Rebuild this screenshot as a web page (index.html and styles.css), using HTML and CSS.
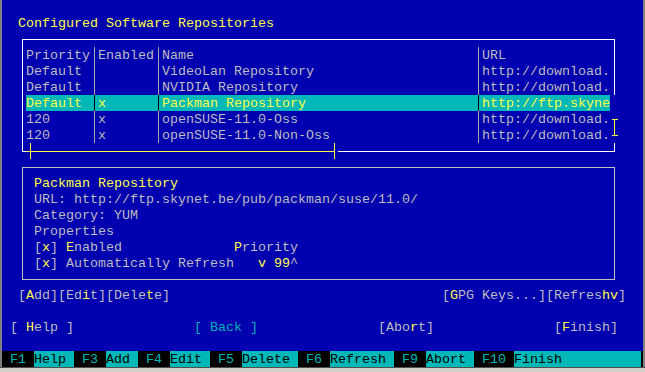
FILE: index.html
```html
<!DOCTYPE html>
<html lang="en">
<head>
<meta charset="UTF-8">
<title>Configured Software Repositories</title>
<link rel="stylesheet" href="styles.css">
</head>
<body>

<div class="screen">
    <div class="line"></div>
    <div class="line title">Configured Software Repositories</div>

    <div class="table-box">
        <div class="trow">
            <span>Priority</span><span class="sep"></span><span>Enabled</span><span class="sep"></span><span>Name</span><span class="sep"></span><span>URL</span>
        </div>
        <div class="trow">
            <span>Default</span><span class="sep"></span><span></span><span class="sep"></span><span>VideoLan Repository</span><span class="sep"></span><span>http://download.</span>
        </div>
        <div class="trow">
            <span>Default</span><span class="sep"></span><span></span><span class="sep"></span><span>NVIDIA Repository</span><span class="sep"></span><span>http://download.</span>
        </div>
        <div class="trow selected">
            <span>Default</span><span class="sep"></span><span>x</span><span class="sep"></span><span>Packman Repository</span><span class="sep"></span><span>http://ftp.skyne</span>
        </div>
        <div class="trow">
            <span>120</span><span class="sep"></span><span>x</span><span class="sep"></span><span>openSUSE-11.0-Oss</span><span class="sep"></span><span>http://download.</span>
        </div>
        <div class="trow">
            <span>120</span><span class="sep"></span><span>x</span><span class="sep"></span><span>openSUSE-11.0-Non-Oss</span><span class="sep"></span><span>http://download.</span>
        </div>

        <!-- scrollbars sit on top of the frame -->
        <svg class="hscroll" width="312" height="16" shape-rendering="crispEdges">
            <rect width="312" height="16" fill="#0000b0"/>
            <rect x="0" y="8" width="309" height="1" fill="#ffff40"/>
            <rect x="4" y="0" width="1" height="16" fill="#ffff40"/>
            <rect x="308" y="0" width="1" height="16" fill="#ffff40"/>
        </svg>
        <svg class="vscroll" width="8" height="48" shape-rendering="crispEdges">
            <rect width="8" height="48" fill="#0000b0"/>
            <rect x="4" y="24" width="1" height="17" fill="#ffff40"/>
            <rect x="2" y="24" width="6" height="1" fill="#ffff40"/>
            <rect x="2" y="40" width="6" height="1" fill="#ffff40"/>
        </svg>
    </div>

    <div class="details-box">
        <div class="line name">Packman Repository</div>
        <div class="line">URL: http://ftp.skynet.be/pub/packman/suse/11.0/</div>
        <div class="line">Category: YUM</div>
        <div class="line">Properties</div>
        <div class="line">[<span class="hk">x</span>] <span class="hk">E</span>nabled              <span class="hk">P</span>riority</div>
        <div class="line">[<span class="hk">x</span>] Automatically Refresh   <span class="hk">v 99</span>^</div>
    </div>

    <div class="line buttons">
        <span>[<span class="hk">A</span>dd][Ed<span class="hk">i</span>t][Dele<span class="hk">t</span>e]</span>
        <span>[<span class="hk">G</span>PG Keys...][Refres<span class="hk">hv</span>]</span>
    </div>

    <div class="line nav">
        <span>[ <span class="hk">H</span>elp ]</span>
        <span class="back">[ Back ]</span>
        <span>[Abo<span class="hk">r</span>t]</span>
        <span>[<span class="hk">F</span>inish]</span>
    </div>

    <div class="line fkeys">
        <span class="fk"> F1 </span><span class="fl">Help </span>
        <span class="fk"> F3 </span><span class="fl">Add </span>
        <span class="fk"> F4 </span><span class="fl">Edit </span>
        <span class="fk"> F5 </span><span class="fl">Delete </span>
        <span class="fk"> F6 </span><span class="fl">Refresh </span>
        <span class="fk"> F9 </span><span class="fl">Abort </span>
        <span class="fk"> F10 </span><span class="fl last">Finish</span>
    </div>
</div>
<div class="frame-bottom"></div>

</body>
</html>
```

FILE: styles.css
```css
body {
    margin: 0;
    background-color: #808080;
    font-family: "Liberation Mono", monospace;
    font-size: 13.333px;
    overflow: hidden;
}
.screen {
    width: 641px;
    height: 368px;
    margin: -1px 0 0 2px;
    background-color: #0000b0;
    color: #bcbcbc;
}
.line {
    height: 16px;
    padding-top: 1px;
    line-height: 15px;
    box-sizing: border-box;
    white-space: pre;
}
.hk {
    color: #ffff40;
}
.title {
    padding-left: 16px;
    color: #ffff40;
}
.table-box {
    position: relative;
    width: 593px;
    margin: 8px 0 0 20px;
    padding: 7px 4px 8px 3px;
    border: 1px solid #ffffff;
    box-sizing: border-box;
}
.trow {
    display: grid;
    grid-template-columns: 64px 8px 56px 8px 312px 8px 128px;
    height: 16px;
    line-height: 15px;
    white-space: pre;
    --sep: #a8a8a8;
}
.trow span {
    padding-top: 1px;
    overflow: hidden;
}
.trow .sep {
    padding-top: 0;
    background: linear-gradient(90deg, transparent 4px, var(--sep) 4px, var(--sep) 5px, transparent 5px);
}
.trow.selected {
    background-color: #00b8b8;
    color: #ffff40;
    --sep: #000000;
}
.hscroll {
    position: absolute;
    left: 3px;
    top: 103px;
    display: block;
}
.vscroll {
    position: absolute;
    left: 587px;
    top: 55px;
    display: block;
}
.details-box {
    width: 593px;
    margin: 15px 0 0 20px;
    padding: 7px 4px 8px 11px;
    border: 1px solid #c0c0c0;
    box-sizing: border-box;
}
.details-box .name {
    color: #ffff40;
}
.buttons {
    display: flex;
    justify-content: space-between;
    margin-top: 7px;
    padding-left: 16px;
    padding-right: 17px;
}
.nav {
    display: flex;
    gap: 120px;
    margin-top: 16px;
    padding-left: 8px;
}
.nav .back {
    color: #00b0b0;
}
.fkeys {
    display: flex;
    margin-top: 16px;
    padding-top: 0;
    padding-right: 2px;
    background-color: #000000;
}
.fkeys span {
    padding-top: 1px;
}
.fk {
    color: #00b8b8;
}
.fl {
    background-color: #00b8b8;
    color: #000000;
}
.fl.last {
    flex: 1;
}
.frame-bottom {
    height: 4px;
    border-top: 1px solid #505050;
    background-color: #d4d0c8;
}
```
